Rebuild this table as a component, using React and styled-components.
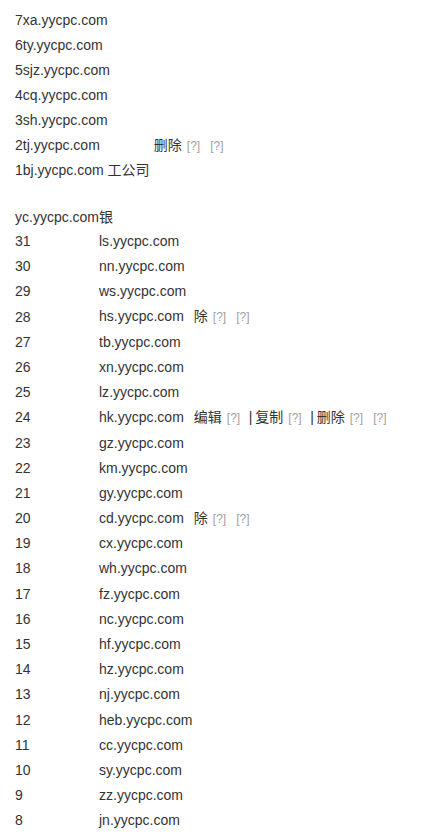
import React from 'react';
import styled, { createGlobalStyle } from 'styled-components';

const GlobalStyle = createGlobalStyle`
  body {
    margin: 0;
    background: #fff;
    color: #333;
    font-family: "Liberation Sans", Arial, "Noto Sans CJK SC", sans-serif;
    font-size: 14px;
  }
`;

const Page = styled.div`
  padding: 8px 0 0 15px;
`;

const SiteList = styled.div`
  display: flex;
  flex-direction: column;
`;

const SiteLine = styled.div`
  line-height: 25px;
  height: 25px;
  white-space: nowrap;
`;

const Heading = styled.div`
  margin-top: 22px;
  line-height: 24px;
  height: 24px;
`;

const Table = styled.div`
  display: grid;
  grid-template-columns: 84px 1fr;
  grid-auto-rows: 25.2px;
  align-items: center;
`;

const Num = styled.div`
  line-height: 25.2px;
`;

const Domain = styled.div`
  line-height: 25.2px;
  white-space: nowrap;
`;

const Action = styled.span`
  margin-left: ${p => p.gap || 0}px;
`;

const Help = styled.span`
  font-size: 12px;
  color: #a0a0a0;
  margin-left: ${p => p.gap || 5}px;
`;

const Pipe = styled.span`
  margin-left: 8.5px;
  margin-right: 3px;
`;

const first = ['7xa', '6ty', '5sjz', '4cq', '3sh'];

const rows = [
  [31, 'ls'], [30, 'nn'], [29, 'ws'], [28, 'hs', 'del'], [27, 'tb'], [26, 'xn'],
  [25, 'lz'], [24, 'hk', 'full'], [23, 'gz'], [22, 'km'], [21, 'gy'],
  [20, 'cd', 'del'], [19, 'cx'], [18, 'wh'], [17, 'fz'], [16, 'nc'],
  [15, 'hf'], [14, 'hz'], [13, 'nj'], [12, 'heb'], [11, 'cc'], [10, 'sy'],
  [9, 'zz'], [8, 'jn'],
];

const Extra = ({ kind }) => {
  if (kind === 'del') {
    return (
      <>
        <Action gap={10}>除</Action>
        <Help>[?]</Help>
        <Help gap={10}>[?]</Help>
      </>
    );
  }
  if (kind === 'full') {
    return (
      <>
        <Action gap={10}>编辑</Action>
        <Help>[?]</Help>
        <Pipe>|</Pipe>复制
        <Help>[?]</Help>
        <Pipe>|</Pipe>删除
        <Help>[?]</Help>
        <Help gap={10}>[?]</Help>
      </>
    );
  }
  return null;
};

export default function App() {
  return (
    <Page>
      <GlobalStyle />
      <SiteList>
        {first.map(s => (
          <SiteLine key={s}>{s}.yycpc.com</SiteLine>
        ))}
        <SiteLine>
          2tj.yycpc.com
          <Action gap={54}>删除</Action>
          <Help>[?]</Help>
          <Help gap={10}>[?]</Help>
        </SiteLine>
        <SiteLine>1bj.yycpc.com 工公司</SiteLine>
      </SiteList>
      <Heading>yc.yycpc.com银</Heading>
      <Table>
        {rows.map(([n, d, kind]) => (
          <React.Fragment key={n}>
            <Num>{n}</Num>
            <Domain>
              {d}.yycpc.com
              <Extra kind={kind} />
            </Domain>
          </React.Fragment>
        ))}
      </Table>
    </Page>
  );
}
